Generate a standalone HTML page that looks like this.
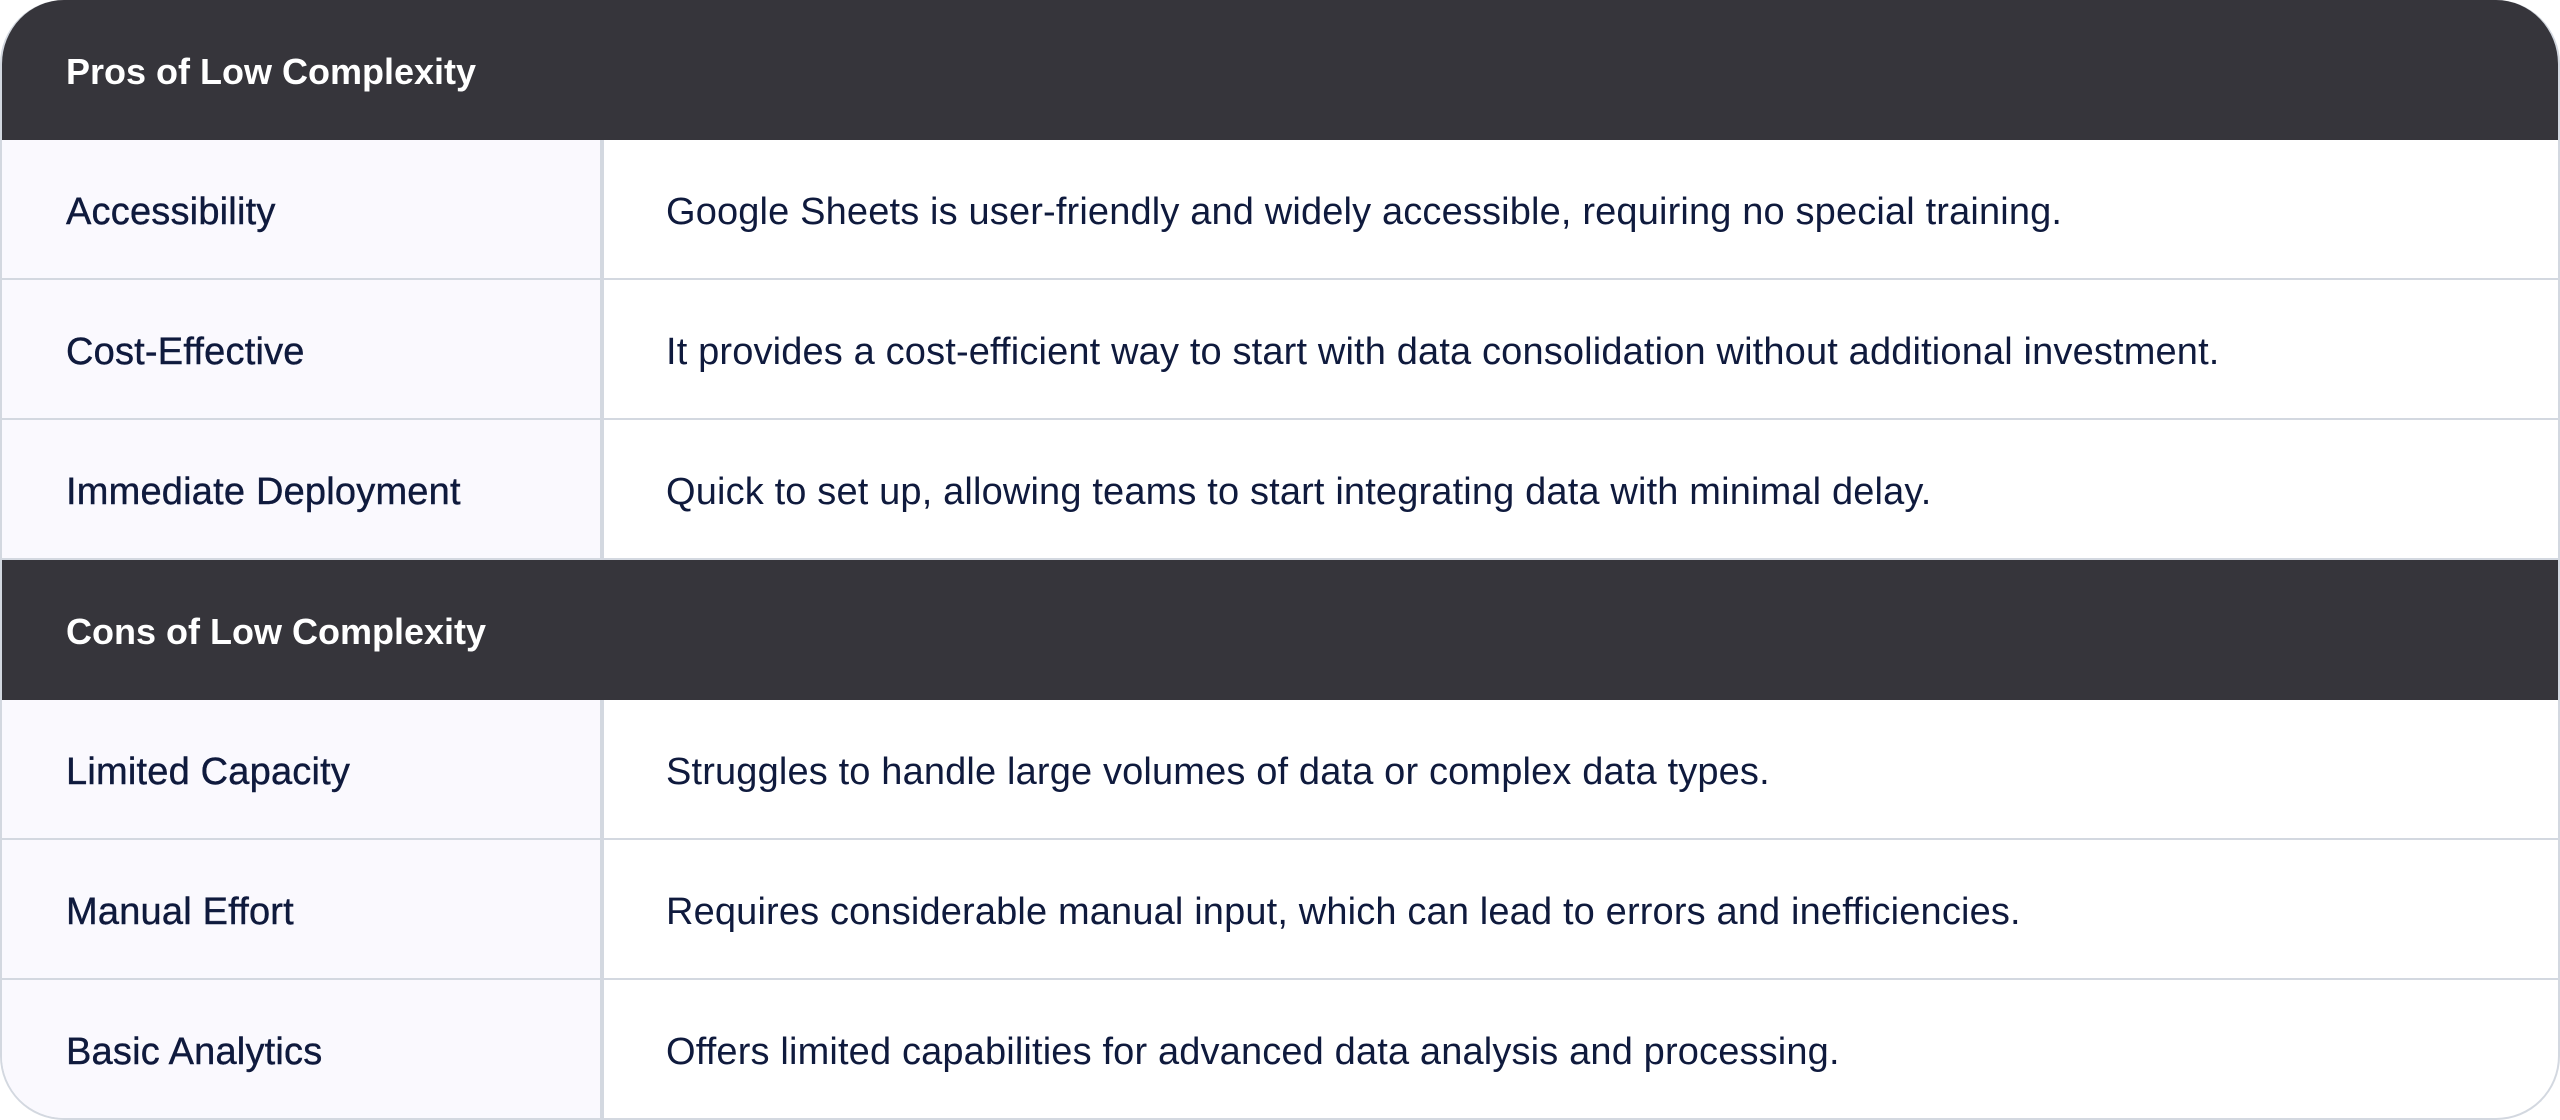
<!DOCTYPE html>
<html><head><meta charset="utf-8"><style>
html,body{margin:0;padding:0;background:#fff;}
body{width:2560px;height:1120px;overflow:hidden;font-family:"Liberation Sans",sans-serif;}
.t{position:absolute;left:0;top:0;width:2560px;height:1120px;box-sizing:border-box;border-radius:64px;overflow:hidden;border:2px solid #d3d8e0;border-top:none;}
.row{position:absolute;left:0;width:2560px;height:140px;box-sizing:border-box;border-bottom:2px solid #d3d8e0;}
.h{background:#36353b;color:#fff;font-weight:bold;font-size:36px;line-height:144px;padding-left:64px;border-bottom:none;}
.l{position:absolute;left:0;top:0;height:138px;background:#faf9fe;border-right:4px solid #d3d8e0;color:#0f1a3d;font-size:38px;line-height:144px;padding-left:64px;box-sizing:border-box;width:602px;-webkit-text-stroke:0.4px #0f1a3d;letter-spacing:0.2px;}
.r{position:absolute;left:664px;top:0;line-height:144px;color:#0f1a3d;font-size:38px;letter-spacing:0.15px;}
</style></head><body>
<div class="t">
<div class="row h" style="top:0">Pros of Low Complexity</div>
<div class="row" style="top:140px"><div class="l">Accessibility</div><div class="r">Google Sheets is user-friendly and widely accessible, requiring no special training.</div></div>
<div class="row" style="top:280px"><div class="l">Cost-Effective</div><div class="r">It provides a cost-efficient way to start with data consolidation without additional investment.</div></div>
<div class="row" style="top:420px"><div class="l">Immediate Deployment</div><div class="r">Quick to set up, allowing teams to start integrating data with minimal delay.</div></div>
<div class="row h" style="top:560px">Cons of Low Complexity</div>
<div class="row" style="top:700px"><div class="l">Limited Capacity</div><div class="r">Struggles to handle large volumes of data or complex data types.</div></div>
<div class="row" style="top:840px"><div class="l">Manual Effort</div><div class="r">Requires considerable manual input, which can lead to errors and inefficiencies.</div></div>
<div class="row" style="top:980px;border-bottom:none"><div class="l">Basic Analytics</div><div class="r">Offers limited capabilities for advanced data analysis and processing.</div></div>
</div>
</body></html>
